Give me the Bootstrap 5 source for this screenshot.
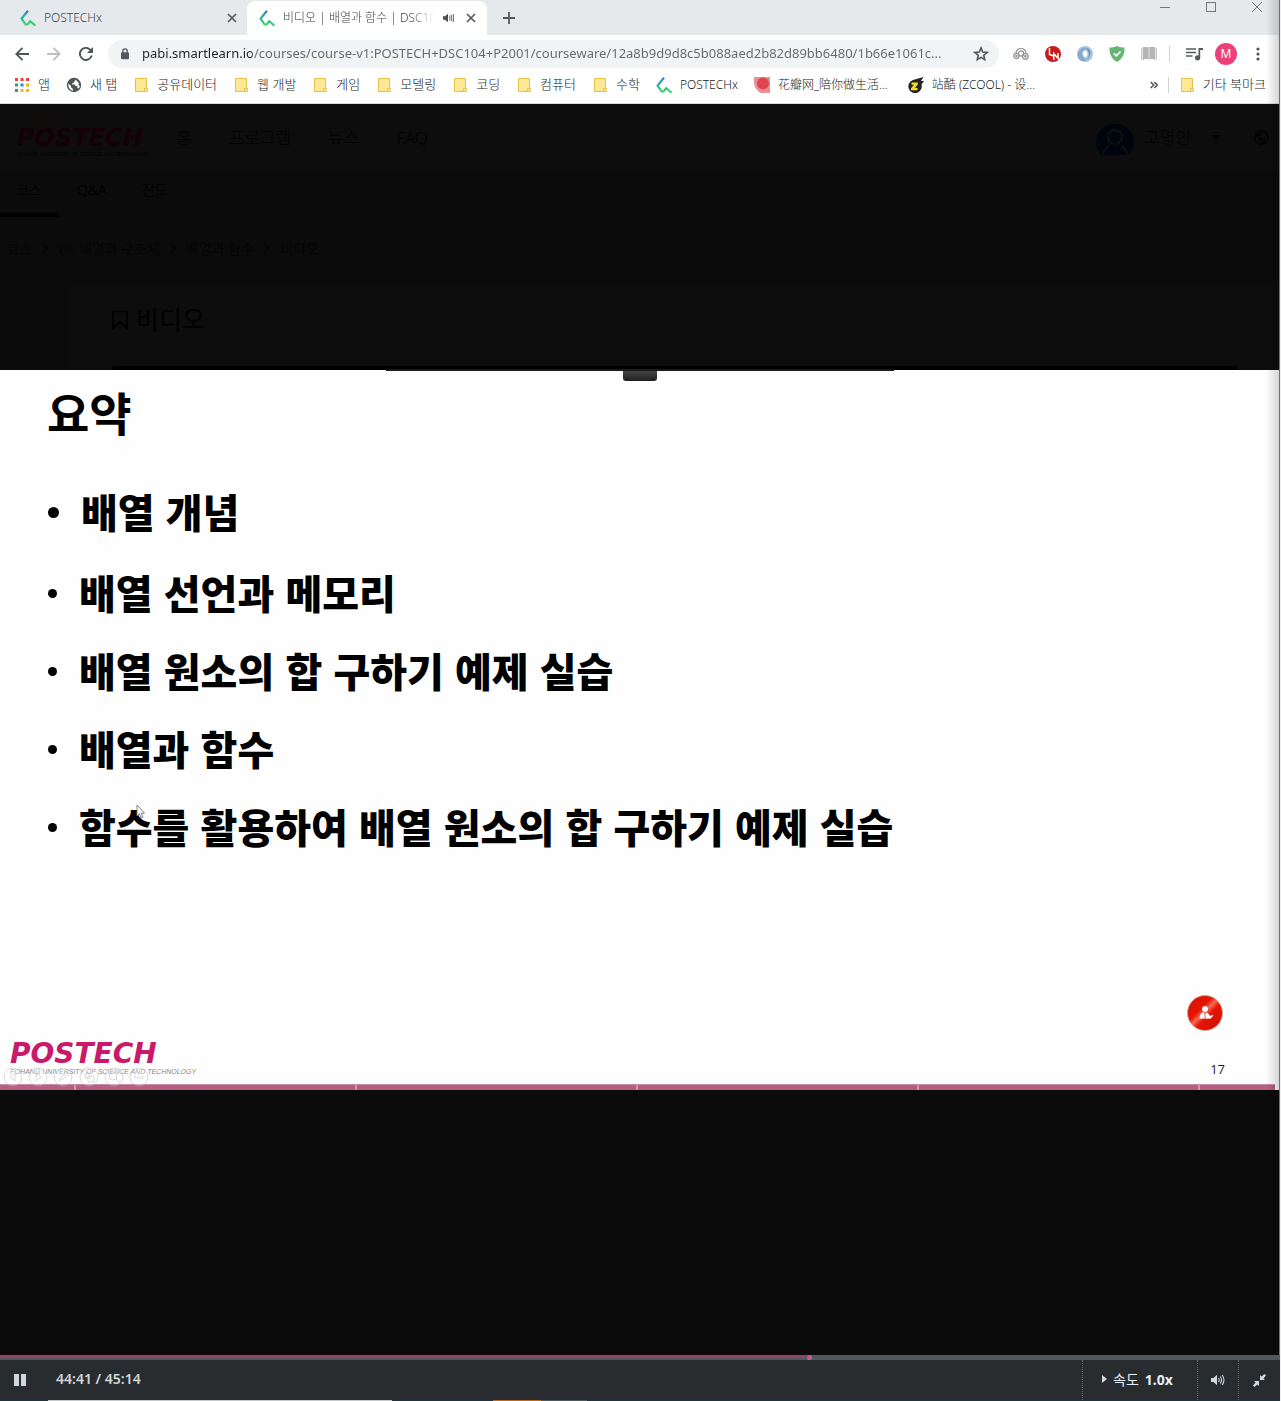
<!DOCTYPE html>
<html lang="ko">
<head>
<meta charset="utf-8">
<meta name="viewport" content="width=device-width, initial-scale=1">
<title>비디오 | 배열과 함수 | DSC104</title>
<link href="https://cdn.jsdelivr.net/npm/bootstrap@5.3.0/dist/css/bootstrap.min.css" rel="stylesheet">
<style>
  body { font-family: "Noto Sans", "Noto Sans CJK KR", sans-serif; background: #0b0b0b; color: #3c4043; border-right: 1px solid #eee; }
  a { color: inherit; text-decoration: none; }
  button { border: 0; background: transparent; padding: 0; color: inherit; }
  svg { display: block; flex: none; }
  .window-edge { position: absolute; top: 0; right: 0; bottom: 46px; width: 14px; pointer-events: none; border-right: 1px solid #707173; background: linear-gradient(to right, transparent, rgba(0,0,0,.16)); z-index: 5; }

  /* browser frame */
  .tab-strip { background: #e5e9ec; height: 35px; font-size: 12px; font-weight: 300; color: #3f4347; }
  .browser-tab { height: 35px; width: 240px; padding: 0 11px 0 12px; }
  .browser-tab:first-child { width: 247px; padding: 0 10px 0 20px; }
  .browser-tab.current { background: #fff; border-radius: 8px 8px 0 0; height: 34px; margin-top: 1px; }
  .fade-title { overflow: hidden; white-space: nowrap; -webkit-mask-image: linear-gradient(to right, #000 84%, transparent); mask-image: linear-gradient(to right, #000 84%, transparent); }
  .caption-btn { width: 46px; height: 14px; }
  .tool-row { background: #fff; height: 37px; padding: 0 6px; }
  .tool-btn { width: 32px; height: 28px; display: flex; align-items: center; justify-content: center; flex: none; }
  .address { background: #f1f3f4; border-radius: 14px; height: 28px; margin: 0 6px; padding: 0 10px 0 8px; }
  .address input { border: 0; outline: 0; font-size: 13px; color: #5f6368; min-width: 0; padding: 0; background: linear-gradient(to right, #202124 114px, #64686c 114px); -webkit-background-clip: text; background-clip: text; -webkit-text-fill-color: transparent; }
  .thin-rule { width: 1px; height: 16px; background: #cfd1d4; }
  .avatar-m { width: 22px; height: 22px; border-radius: 50%; background: #ec407a; color: #fff; font-size: 12px; line-height: 22px; }
  .bookmarks { background: #fff; height: 32px; border-bottom: 1px solid #d9dbdd; padding: 0 14px 5px; font-size: 12px; font-weight: 300; color: #202327; }
  .bookmarks .ko { font-size: 13px; }
  .bookmarks a { white-space: nowrap; }
  .bookmarks-end { gap: 10px; }

  /* dimmed course page */
  .course { background: #0b0b0b; color: #020202; height: 266px; }
  .course-nav { background: #0d0d0d; height: 67px; font-size: 17px; padding: 0 10px 0 17px; font-weight: 300; }
  .course-logo { width: 159px; }
  .course-menu { gap: 37px; }
  .user-area { margin-left: 10px; margin-right: 20px; }
  .user-caret { margin-right: 32px; }
  .brand-name { font: italic bold 28px/28px "DejaVu Sans", sans-serif; }
  .brand-name.brand-dim { font-size: 24px; line-height: 24px; color: #150008; }
  .brand-note { font-size: 7px; line-height: 8px; color: #150a00; padding-left: 4px; }
  .brand-line { font: italic 7px/8px "Liberation Sans", sans-serif; white-space: nowrap; }
  .brand-line.brand-line-sm { font-size: 5px; }
  .course-tabs { height: 46px; font-size: 14px; gap: 3px; }
  .course-tabs a { padding: 8px 16px 0; }
  .course-tabs a.chosen { border-bottom: 4px solid #000; }
  .crumbs { height: 67px; font-size: 14px; padding: 0 6px 4px; gap: 10px; color: #050505; }
  .lesson { background: #0d0d0d; margin-left: 71px; padding: 15px 42px 0 41px; }
  .lesson h1 { font-size: 25px; font-weight: 500; line-height: 40px; margin: 0; }
  .player-top { height: 4px; background: #000; border-radius: 4px 4px 0 0; }

  /* lecture slide */
  .slide { background: #fefefe; color: #000; height: 720px; font-family: "Noto Sans CJK KR", sans-serif; }
  .slide h2 { font-size: 46px; font-weight: 700; line-height: 60px; margin: 0; padding: 11px 0 0 47px; }
  .slide ul { font-size: 40px; font-weight: 900; line-height: 78px; padding: 31px 0 0 48px; margin: 0; }
  .slide li { display: flex; align-items: center; gap: 22px; white-space: nowrap; }
  .slide li::before { content: ""; width: 9px; height: 9px; border-radius: 50%; background: #000; flex: none; margin-top: 3px; }
  .slide li:first-child { margin-bottom: 3px; }
  .slide li:first-child::before { width: 11px; height: 11px; }
  .pen-pointer { position: absolute; left: 136px; top: 434px; }
  .screen-clip { position: absolute; top: -1px; left: 50%; transform: translateX(-50%); width: 508px; border-top: 2px solid #1b1b1b; }
  .screen-clip i { width: 34px; height: 10px; background: linear-gradient(#444, #202020); border-radius: 0 0 3px 3px; }
  .slide-foot { padding: 0 55px 0 10px; }
  .slide-brand { padding-bottom: 8px; }
  .slide-logo { color: #c8196b; }
  .slide-tag { color: #84868a; }
  .show-tools { position: absolute; left: 2px; bottom: 2px; opacity: .5; }
  .attend { margin-bottom: 27px; }
  .page-no { font: 13px/18px "Open Sans", sans-serif; color: #222; padding-bottom: 6px; }
  .slide-bar { height: 6px; margin-right: 5px; background: repeating-linear-gradient(to right, #b65f83 0, #b65f83 74px, #d796b0 74px, #d796b0 76px, #b65f83 76px, #b65f83 281px); border-top: 1px solid #c98ba4; }

  /* player controls */
  .seek { -webkit-appearance: none; appearance: none; display: block; width: 100%; height: 5px; margin: 0; background: linear-gradient(#983f68, #983f68) 0 0 / 63% 3px no-repeat #4f595d; }
  .seek::-webkit-slider-thumb { -webkit-appearance: none; width: 5px; height: 5px; border-radius: 2px; background: #cb598d; }
  .controls { background: #282c2e; color: #cfd8dc; height: 40px; font-size: 14px; font-weight: 600; }
  .controls .clock { padding-bottom: 3px; }
  .controls .cell { border-left: 1px dotted #60686c; width: 41px; height: 40px; display: flex; align-items: center; justify-content: center; }
  .controls .cell:last-child { width: 42px; }
  .controls .cell.speed { width: 115px; gap: 6px; padding: 0 5px 2px 0; color: #e8eef0; }
  .taskbar { height: 1px; background: linear-gradient(to right, #1f333c 48px, #c8c8c8 48px, #c8c8c8 392px, #1f333c 392px, #1f333c 493px, #b76a20 493px, #b76a20 541px, #4b5b5c 541px, #4b5b5c 587px, #1f333c 587px); }
</style>
<script src="https://cdn.jsdelivr.net/npm/bootstrap@5.3.0/dist/js/bootstrap.bundle.min.js"></script>
</head>
<body class="position-relative d-flex flex-column min-vh-100">
<svg width="0" height="0" class="position-absolute" aria-hidden="true">
  <defs>
    <linearGradient id="px" x1="0" y1="0" x2="0" y2="1"><stop offset="0" stop-color="#3a7fc0"/><stop offset=".5" stop-color="#2ab4a0"/><stop offset="1" stop-color="#38dc62"/></linearGradient>
    <linearGradient id="redglass" x1="0" y1="0" x2="1" y2="1"><stop offset="0" stop-color="#d50f00"/><stop offset=".38" stop-color="#e81500"/><stop offset=".48" stop-color="#f46a58"/><stop offset=".58" stop-color="#e81500"/><stop offset="1" stop-color="#c90d00"/></linearGradient>
    <symbol id="postechx" viewBox="0 0 16 16"><path d="M8 .8 1.600 8.600 5.600 14.500H7.500L10.200 11.200 11.800 12.500 15.400 15.800" fill="none" stroke="url(#px)" stroke-width="2.200"/></symbol>
    <symbol id="folder" viewBox="0 0 16 16"><path d="M2.500 1.500h11v9l.8.8v3.200H2.500z" fill="#ffe793" stroke="#e8c14a"/><path d="M11.500 14.500v-3h2.500" fill="none" stroke="#e8c14a"/></symbol>
    <symbol id="close" viewBox="0 0 10 10"><path d="m1 1 8 8m0-8L1 9" stroke="#55595d" stroke-width="1.700"/></symbol>
    <symbol id="globe" viewBox="0 0 16 16"><circle cx="8" cy="8" r="7.200" fill="currentColor"/><path d="M2.300 6.500 5 9v1.200l2 1.800v1.800C4.200 13.200 2.300 11 2.300 8zM9.500 2.500C9 4.500 8 4 8 5.500L6.200 6.200v1.300h2.400l1 1.500h1.800v2l1.500.5 1-2.500-1.500-1 .5-2-1.500-1.500z" fill="var(--land)"/></symbol>
  </defs>
</svg>

<header>
  <nav class="tab-strip d-flex align-items-center" aria-label="탭">
    <div class="browser-tab d-flex align-items-center">
      <svg width="16" height="16"><use href="#postechx"/></svg>
      <a href="#" class="flex-grow-1 ms-2">POSTECHx</a>
      <button type="button" aria-label="탭 닫기"><svg width="10" height="10"><use href="#close"/></svg></button>
    </div>
    <div class="browser-tab current d-flex align-items-center">
      <svg width="16" height="16"><use href="#postechx"/></svg>
      <a href="#" class="fade-title flex-grow-1 ms-2">비디오 | 배열과 함수 | DSC104</a>
      <svg class="mx-2" width="11" height="10" viewBox="0 0 11 10"><path d="M0 3.300h2L5 .8v8.400L2 6.700H0z" fill="#4b4e52"/><path d="M6.800 2.500v5M8.600 1.800v6.400M10.400 1v8" stroke="#6b6e72" fill="none"/></svg>
      <button type="button" class="ms-1" aria-label="탭 닫기"><svg width="10" height="10"><use href="#close"/></svg></button>
    </div>
    <button type="button" class="ms-3" aria-label="새 탭"><svg width="12" height="12" viewBox="0 0 12 12"><path d="M6 0v12M0 6h12" stroke="#55595d" stroke-width="1.800"/></svg></button>
    <div class="ms-auto d-flex align-self-start">
      <button type="button" class="caption-btn d-flex justify-content-center align-items-center" aria-label="최소화"><svg width="10" height="10"><path d="M0 5.500h10" stroke="#777"/></svg></button>
      <button type="button" class="caption-btn d-flex justify-content-center align-items-center" aria-label="최대화"><svg width="10" height="10"><rect x=".5" y=".5" width="9" height="9" fill="none" stroke="#777"/></svg></button>
      <button type="button" class="caption-btn d-flex justify-content-center align-items-center" aria-label="닫기"><svg width="10" height="10"><path d="m0 0 10 10M10 0 0 10" stroke="#777"/></svg></button>
    </div>
  </nav>

  <div class="tool-row d-flex align-items-center">
    <button type="button" class="tool-btn" aria-label="뒤로"><svg width="14" height="14" viewBox="0 0 14 14"><path d="M14 7H1.500M7.500.8 1.300 7l6.200 6.200" fill="none" stroke="#505458" stroke-width="1.800"/></svg></button>
    <button type="button" class="tool-btn" aria-label="앞으로"><svg width="14" height="14" viewBox="0 0 14 14"><path d="M0 7h12.500M6.500.8 12.700 7l-6.200 6.200" fill="none" stroke="#bdbfc2" stroke-width="1.800"/></svg></button>
    <button type="button" class="tool-btn" aria-label="새로고침"><svg width="14" height="14" viewBox="0 0 14 14"><path d="M12.700 8.500A6 6 0 1 1 11.300 2.800l1 1.200" fill="none" stroke="#505458" stroke-width="1.900"/><path d="M14 0v6H8z" fill="#505458"/></svg></button>
    <div class="address d-flex align-items-center flex-grow-1">
      <svg class="ms-1" width="10" height="12" viewBox="0 0 10 12"><rect y="4.300" x="1" width="8" height="7" rx="1" fill="#55595d"/><path d="M2.800 5V3a2.200 2.200 0 0 1 4.400 0v2" fill="none" stroke="#55595d" stroke-width="1.300"/></svg>
      <input class="flex-grow-1 mx-2 ps-1" aria-label="주소" value="pabi.smartlearn.io/courses/course-v1:POSTECH+DSC104+P2001/courseware/12a8b9d9d8c5b088aed2b82d89bb6480/1b66e1061c...">
      <button type="button" aria-label="북마크 추가"><svg width="16" height="16" viewBox="0 0 16 16"><path d="m8 1.900 1.700 4.200 4.500.3-3.500 2.900 1.100 4.400L8 11.300l-3.800 2.400 1.100-4.400-3.500-2.900 4.500-.3z" fill="none" stroke="#505458" stroke-width="1.500"/></svg></button>
    </div>
    <button type="button" class="tool-btn" aria-label="확장 프로그램 1"><svg width="16" height="14" viewBox="0 0 16 14" fill="none" stroke="#8f9193" stroke-width="1.200"><path d="M3 6a5 4.500 0 0 1 10 0"/><circle cx="3.300" cy="9" r="2.600"/><circle cx="8" cy="6.500" r="2.600"/><circle cx="12.400" cy="9.400" r="2.800"/><circle cx="12.400" cy="9.400" r=".7"/><circle cx="3.300" cy="9" r=".6"/></svg></button>
    <button type="button" class="tool-btn" aria-label="확장 프로그램 2"><svg width="16" height="16" viewBox="0 0 16 16"><circle cx="8" cy="8" r="8" fill="#c71a1c"/><path d="M4.500 2v6.500l4 1.500M8.800 14V7.500l4.200 5V7" fill="none" stroke="#fff" stroke-width="1.500"/></svg></button>
    <button type="button" class="tool-btn" aria-label="확장 프로그램 3"><svg width="16" height="16" viewBox="0 0 16 16"><circle cx="8" cy="8" r="8" fill="#aac3dc"/><path d="M1 12C0 6 4 1 10 2L7 4C4 6 4 9 7 12l3 2C6 16 3 15 1 12z" fill="#86a9cd"/><path d="M8 4.500c3 1 3.500 5 .5 7-3-1-3.500-5-.5-7z" fill="#fff"/><path d="M9 2c5 1 6 7 1 11 3-4 3-7-1-11z" fill="#547eab"/></svg></button>
    <button type="button" class="tool-btn" aria-label="확장 프로그램 4"><svg width="16" height="16" viewBox="0 0 16 16"><path d="M8 0c2.500 1.100 5 1.500 7.500 1.500C15.800 8 13.500 13 8 16 2.500 13 .2 8 .5 1.500 3 1.500 5.500 1.100 8 0z" fill="#66b574"/><path d="m4.800 7.300 2.500 2.500 4.300-4.300" fill="none" stroke="#fff" stroke-width="1.700"/></svg></button>
    <button type="button" class="tool-btn" aria-label="확장 프로그램 5"><svg width="16" height="14" viewBox="0 0 16 14"><path d="M0 1h3v12H0zm13 0h3v12h-3z" fill="#c8c8c8"/><path d="M2 0h5l1 1 1-1h5v12H9l-1 1-1-1H2z" fill="#b5b5b5"/><path d="M8 1v12M1.500 0v13M14.500 0v13" stroke="#eee" stroke-width=".8"/></svg></button>
    <span class="thin-rule ms-1 me-2"></span>
    <button type="button" class="tool-btn" aria-label="미디어 제어"><svg width="17" height="14" viewBox="0 0 17 14"><path d="M0 2h10M0 5.500h10M0 9h6.500" stroke="#55595d" stroke-width="1.500"/><path d="M12.500 1H17v2h-2.800v7.500h-1.700z" fill="#55595d"/><circle cx="11.600" cy="10.800" r="2.600" fill="#55595d"/></svg></button>
    <button type="button" class="tool-btn" aria-label="프로필"><span class="avatar-m">M</span></button>
    <button type="button" class="tool-btn" aria-label="메뉴"><svg width="4" height="14" viewBox="0 0 4 14" fill="#505458"><circle cx="2" cy="2" r="1.600"/><circle cx="2" cy="7" r="1.600"/><circle cx="2" cy="12" r="1.600"/></svg></button>
  </div>

  <nav class="bookmarks d-flex align-items-center gap-3" aria-label="북마크">
    <a href="#" class="ko d-flex align-items-center gap-2"><svg width="16" height="16" viewBox="0 0 16 16"><path fill="#ea4335" d="M1 1h3v3H1zM6.500 1h3v3h-3zM12 1h3v3h-3z"/><path fill="#34a060" d="M1 6.500h3v3H1zM1 12h3v3H1z"/><path fill="#2b83f0" d="M6.500 6.500h3v3h-3z"/><path fill="#f9b50b" d="M12 6.500h3v3h-3zM6.500 12h3v3h-3zM12 12h3v3h-3z"/></svg>앱</a>
    <a href="#" class="ko d-flex align-items-center gap-2"><svg width="16" height="16" color="#505458" style="--land:#fff"><use href="#globe"/></svg>새 탭</a>
    <a href="#" class="ko d-flex align-items-center gap-2"><svg width="16" height="16"><use href="#folder"/></svg>공유데이터</a>
    <a href="#" class="ko d-flex align-items-center gap-2"><svg width="16" height="16"><use href="#folder"/></svg>웹 개발</a>
    <a href="#" class="ko d-flex align-items-center gap-2"><svg width="16" height="16"><use href="#folder"/></svg>게임</a>
    <a href="#" class="ko d-flex align-items-center gap-2"><svg width="16" height="16"><use href="#folder"/></svg>모델링</a>
    <a href="#" class="ko d-flex align-items-center gap-2"><svg width="16" height="16"><use href="#folder"/></svg>코딩</a>
    <a href="#" class="ko d-flex align-items-center gap-2"><svg width="16" height="16"><use href="#folder"/></svg>컴퓨터</a>
    <a href="#" class="ko d-flex align-items-center gap-2"><svg width="16" height="16"><use href="#folder"/></svg>수학</a>
    <a href="#" class="d-flex align-items-center gap-2"><svg width="16" height="16"><use href="#postechx"/></svg>POSTECHx</a>
    <a href="#" class="d-flex align-items-center gap-2 me-1"><svg width="16" height="16" viewBox="0 0 16 16"><path d="M0 0h16v16H7C3 14 0 10 0 5z" fill="#ec8f95"/><circle cx="9" cy="6.500" r="6" fill="#e0454f"/></svg><span lang="zh">花瓣网_陪你做生活...</span></a>
    <a href="#" class="d-flex align-items-center gap-2"><svg width="16" height="16" viewBox="0 0 16 16"><path d="M5 3 15.500 0 13 4h3l-2.500 3.500A6.700 6.700 0 1 1 5 3z" fill="#222"/><path d="M3.500 5.500h6.300v2L7 11h2.500v2.200H3v-2l3-3.500H3.500z" fill="#f7dc1c"/></svg><span lang="zh">站酷 (ZCOOL) - 设...</span></a>
    <div class="bookmarks-end ms-auto d-flex align-items-center">
      <button type="button" aria-label="북마크 더보기"><svg width="8" height="8" viewBox="0 0 8 8"><path d="m.7 1 3 3-3 3m3.600-6 3 3-3 3" fill="none" stroke="#505458" stroke-width="1.600"/></svg></button>
      <span class="thin-rule"></span>
      <a href="#" class="ko d-flex align-items-center gap-2"><svg width="16" height="16"><use href="#folder"/></svg>기타 북마크</a>
    </div>
  </nav>
</header>

<section class="course d-flex flex-column">
  <nav class="course-nav d-flex align-items-center">
    <a href="#" class="course-logo d-flex flex-column"><span class="brand-note">가치창출대학</span><span class="brand-name brand-dim">POSTECH</span><span class="brand-line brand-line-sm">POHANG UNIVERSITY OF SCIENCE AND TECHNOLOGY</span></a>
    <div class="course-menu d-flex">
      <a href="#">홈</a><a href="#">프로그램</a><a href="#">뉴스</a><a href="#">FAQ</a>
    </div>
    <div class="ms-auto d-flex align-items-center">
      <svg width="38" height="36" viewBox="0 0 38 36"><path d="M6 35a19 18 0 1 1 26 0z" fill="#00050d"/><circle cx="19" cy="17" r="7" fill="none" stroke="#0d0f10" stroke-width="2"/><path d="M6.500 34C9 29 11 27 13 25m18.500 9C29 29 27 27 25 25" stroke="#0d0f10" stroke-width="2" fill="none"/></svg>
      <span class="user-area">고명인</span>
      <button type="button" class="user-caret" aria-label="사용자 메뉴"><svg width="10" height="5"><path d="M0 0h10L5 5z" fill="#000"/></svg></button>
      <svg width="17" height="17" color="#040404" style="--land:#0d0d0d"><use href="#globe"/></svg>
    </div>
  </nav>
  <nav class="course-tabs d-flex">
    <a href="#" class="chosen">코스</a><a href="#">Q&amp;A</a><a href="#">진도</a>
  </nav>
  <nav class="crumbs d-flex align-items-center" aria-label="위치">
    <a href="#">코스</a><svg width="6" height="9"><path d="m1 .5 4 4-4 4" fill="none" stroke="#050505" stroke-width="1.500"/></svg><a href="#">Ⅷ. 배열과 구조체</a><svg width="6" height="9"><path d="m1 .5 4 4-4 4" fill="none" stroke="#050505" stroke-width="1.500"/></svg><a href="#">배열과 함수</a><svg width="6" height="9"><path d="m1 .5 4 4-4 4" fill="none" stroke="#050505" stroke-width="1.500"/></svg><span>비디오</span>
  </nav>
  <div class="lesson flex-grow-1 d-flex flex-column">
    <div class="d-flex align-items-center gap-2"><svg width="16" height="20" viewBox="0 0 16 20"><path d="M1 2.500h14V19l-7-6-7 6z" fill="none" stroke="#000" stroke-width="2"/></svg><h1>비디오</h1></div>
    <div class="player-top mt-auto"></div>
  </div>
</section>

<main class="slide position-relative d-flex flex-column">
  <div class="screen-clip d-flex justify-content-center"><i></i></div>
  <h2>요약</h2>
  <ul>
    <li>배열 개념</li>
    <li>배열 선언과 메모리</li>
    <li>배열 원소의 합 구하기 예제 실습</li>
    <li>배열과 함수</li>
    <li>함수를 활용하여 배열 원소의 합 구하기 예제 실습</li>
  </ul>
  <svg class="pen-pointer" width="10" height="15" viewBox="0 0 10 15"><path d="M1 1v11l2.500-2.300L5.300 14l1.700-.8-1.700-4h3.200z" fill="#fff" stroke="#777" stroke-width=".9"/></svg>
  <div class="slide-foot mt-auto d-flex align-items-end justify-content-between">
    <div class="slide-brand d-flex flex-column">
      <span class="brand-name slide-logo">POSTECH</span>
      <span class="brand-line slide-tag">POHANG UNIVERSITY OF SCIENCE AND TECHNOLOGY</span>
    </div>
    <div class="d-flex flex-column align-items-end">
      <button type="button" class="attend" aria-label="출석"><svg width="40" height="40" viewBox="0 0 40 40"><circle cx="20" cy="20" r="17.500" fill="url(#redglass)" stroke="#c9a9a5"/><circle cx="20" cy="16" r="2.900" fill="#fff"/><path d="M14.500 25.500c0-4 2-6 4.300-6l1.200 2 1.200-2c1 0 2 .7 2.800 2l1.600 1.500 1.900-1.300.9.900-3 3.200z" fill="#fff"/><path d="M20 21v4.500" stroke="#d33" stroke-width=".8"/></svg></button>
      <span class="page-no">17</span>
    </div>
  </div>
  <svg class="show-tools" width="150" height="22" viewBox="0 0 150 22" fill="none" stroke="#b5b5b5"><g fill="#fff" fill-opacity=".5"><circle cx="11" cy="11" r="9"/><circle cx="36" cy="11" r="9"/><circle cx="61" cy="11" r="9"/><circle cx="87" cy="11" r="9"/><circle cx="112" cy="11" r="9"/><circle cx="137" cy="11" r="9"/></g><path d="M13 7 8 11l5 4zM34 7l5 4-5 4zM57 15l2-4 6-5 2 2-6 5zM83 7h5v5h-5zm3 3h6v6h-6zM114 13l4 4M132 10h2m2 0h2m2 0h2M132 12h10"/><circle cx="111" cy="10" r="4"/></svg>
  <div class="slide-bar"></div>
</main>

<footer class="mt-auto">
  <input class="seek" type="range" min="0" max="1000" value="633" aria-label="재생 위치">
  <div class="controls d-flex align-items-center">
    <button type="button" class="ms-2 ps-1 me-4 pe-1" aria-label="일시정지"><svg width="16" height="12" viewBox="0 0 16 12"><path d="M2 0h5v12H2zM9 0h5v12H9z" fill="#cfd8dc"/></svg></button>
    <span class="clock">44:41 / 45:14</span>
    <button type="button" class="cell speed ms-auto"><svg width="5" height="8"><path d="M0 0l5 4-5 4z" fill="#cfd8dc"/></svg><span>속도</span><b>1.0x</b></button>
    <button type="button" class="cell" aria-label="음량"><svg width="14" height="12" viewBox="0 0 14 12"><path d="M0 4h2.500L6 .8v10.400L2.500 8H0z" fill="#cfd8dc"/><path d="M7.500 4q1.500 2 0 4M9.300 2.500q2.500 3.500 0 7M11.200 1q3.500 5 0 10" fill="none" stroke="#cfd8dc" stroke-width="1.100"/></svg></button>
    <button type="button" class="cell" aria-label="전체 화면 종료"><svg width="13" height="13" viewBox="0 0 13 13" fill="#cfd8dc"><path d="M7 1v5h5l-1.600-1.600L13 1.500 11.500 0 8.600 2.600zM6 12V7H1l1.600 1.600L0 11.500 1.500 13l2.900-2.600z"/></svg></button>
  </div>
  <div class="taskbar"></div>
</footer>
<div class="window-edge"></div>
</body>
</html>
